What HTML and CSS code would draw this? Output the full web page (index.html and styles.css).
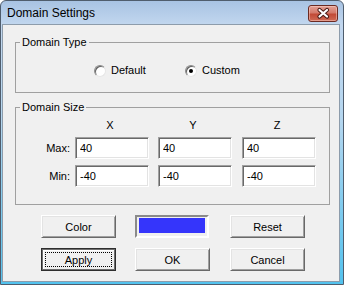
FILE: index.html
```html
<!DOCTYPE html>
<html lang="en">
<head>
  <meta charset="UTF-8">
  <title>Domain Settings</title>
  <link rel="stylesheet" href="styles.css">
</head>
<body>

<div class="window">
  <div class="titlebar">
    <span class="title">Domain Settings</span>
    <button class="close" title="Close">
      <svg width="30" height="17" viewBox="0 0 30 17">
        <path d="M11.5 5 L19 11.5 M19 5 L11.5 11.5" stroke="#4a1a14" stroke-width="4.2" stroke-linecap="round" fill="none"/>
        <path d="M11.5 5 L19 11.5 M19 5 L11.5 11.5" stroke="#fff" stroke-width="2.2" stroke-linecap="round" fill="none"/>
      </svg>
    </button>
  </div>

  <div class="client">
    <fieldset class="group group-type">
      <legend>Domain Type</legend>
      <div class="radio-row">
        <label class="option">
          <span class="radio"></span>
          <span>Default</span>
        </label>
        <label class="option">
          <span class="radio checked"></span>
          <span>Custom</span>
        </label>
      </div>
    </fieldset>

    <fieldset class="group group-size">
      <legend>Domain Size</legend>
      <div class="size-grid">
        <span></span>
        <span class="axis">X</span>
        <span class="axis">Y</span>
        <span class="axis">Z</span>

        <span class="row-label">Max:</span>
        <input type="text" class="field" value="40">
        <input type="text" class="field" value="40">
        <input type="text" class="field" value="40">

        <span class="row-label">Min:</span>
        <input type="text" class="field" value="-40">
        <input type="text" class="field" value="-40">
        <input type="text" class="field" value="-40">
      </div>
    </fieldset>

    <div class="actions">
      <button class="btn">Color</button>
      <div class="swatch"><div class="swatch-fill"></div></div>
      <button class="btn">Reset</button>

      <button class="btn btn-default">Apply</button>
      <button class="btn">OK</button>
      <button class="btn">Cancel</button>
    </div>
  </div>
</div>

</body>
</html>
```

FILE: styles.css
```css
body {
  margin: 0;
  padding: 0;
  font-family: "Liberation Sans", Arial, sans-serif;
  font-size: 11px;
  color: #000;
  background: #fff;
}

.window {
  width: 344px;
  height: 285px;
  box-sizing: border-box;
  border: 1px solid #4f5d6d;
  border-radius: 6px 6px 0 0;
  background: linear-gradient(#a8c3e3 0px, #c2d7ef 24px, #b4d6ef 120px, #52c2ee 100%);
  display: flex;
  flex-direction: column;
  padding: 0 3px 2px 1px;
}

.titlebar {
  height: 23px;
  display: flex;
  align-items: flex-start;
  justify-content: space-between;
}

.title {
  font-size: 12px;
  line-height: 21px;
  padding: 2px 0 0 5px;
  color: #000;
}

.close {
  width: 30px;
  height: 17px;
  margin: 4px 2px 0 0;
  padding: 0;
  border: 1px solid #6b2a22;
  border-radius: 3px;
  background: linear-gradient(#e3a195 0%, #d47a6b 45%, #c24a36 55%, #cf6a55 100%);
  box-shadow: inset 0 0 0 1px rgba(255, 220, 210, 0.45);
  box-sizing: border-box;
  display: flex;
  align-items: center;
  justify-content: center;
}

.close svg {
  display: block;
  margin: -1px;
}

.client {
  flex: 1;
  background: #f0f0f0;
  border: 1px solid #8d9cab;
  padding: 0 9px 0 12px;
}

.group {
  margin: 0;
  padding: 0;
  min-inline-size: 0;
  border: 1px solid #a0a0a0;
}

.group legend {
  margin-left: 4px;
  padding: 0 2px;
  line-height: 13px;
}

.group-type {
  margin-top: 11px;
  padding: 15px 0 15px 0;
}

.radio-row {
  display: flex;
  align-items: center;
  height: 13px;
  padding-left: 78px;
}

.option {
  display: flex;
  align-items: center;
  gap: 5px;
  line-height: 13px;
}

.option:first-child {
  width: 91px;
}

.radio {
  width: 12px;
  height: 12px;
  box-sizing: border-box;
  border-radius: 50%;
  border: 1px solid;
  border-color: #8a8a8a #e6e6e6 #e6e6e6 #8a8a8a;
  box-shadow: inset 1px 1px 0 #5f5f5f;
  background: #fff;
  display: flex;
  align-items: center;
  justify-content: center;
}

.radio.checked::after {
  content: "";
  width: 4px;
  height: 4px;
  border-radius: 50%;
  background: #000;
}

.group-size {
  margin-top: 8px;
  padding: 5px 0 17px 0;
}

.size-grid {
  display: grid;
  grid-template-columns: 59px 83px 84px 74px;
  grid-template-rows: 12px 22px 22px;
  row-gap: 6px;
  align-items: center;
}

.axis {
  width: 74px;
  padding-right: 4px;
  box-sizing: border-box;
  text-align: center;
  line-height: 13px;
  align-self: start;
}

.row-label {
  text-align: right;
  padding-right: 5px;
}

.field {
  width: 74px;
  height: 22px;
  box-sizing: border-box;
  margin: 0;
  padding: 0 0 0 4px;
  border: 1px solid;
  border-color: #a0a0a0 #fff #fff #a0a0a0;
  box-shadow: inset 1px 1px 0 #696969, inset -1px -1px 0 #e3e3e3;
  background: #fff;
  font-family: inherit;
  font-size: 11px;
  color: #000;
  outline: none;
}

.actions {
  margin-top: 10px;
  padding-left: 26px;
  display: grid;
  grid-template-columns: 94px 95px 75px;
  row-gap: 10px;
}

.btn {
  width: 75px;
  height: 23px;
  box-sizing: border-box;
  margin: 0;
  padding: 0;
  border: 1px solid;
  border-color: #fff #696969 #696969 #fff;
  box-shadow: inset 1px 1px 0 #e3e3e3, inset -1px -1px 0 #a0a0a0;
  background: #f0f0f0;
  font-family: inherit;
  font-size: 11px;
  color: #000;
}

.btn-default {
  border: 1px solid #2e2e2e;
  box-shadow: inset 0 0 0 1px #6e6e6e, inset 2px 2px 0 #fff;
  outline: 1px dotted #000;
  outline-offset: -5px;
}

.swatch {
  width: 74px;
  height: 23px;
  box-sizing: border-box;
  border: 2px solid;
  border-color: #8a8a8a #fff #fff #8a8a8a;
  padding: 1px 2px 3px 2px;
  background: #f0f0f0;
}

.swatch-fill {
  height: 100%;
  background: #3535fb;
}
```
